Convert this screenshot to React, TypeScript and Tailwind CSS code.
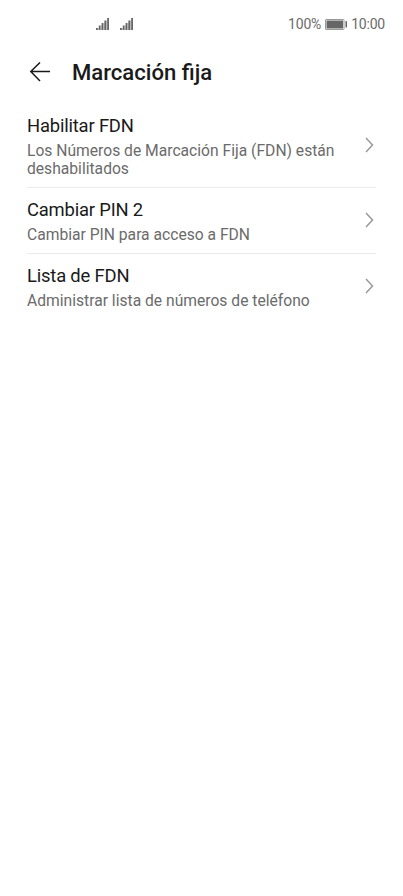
const items = [
  { title: "Habilitar FDN", text: "Los Números de Marcación Fija (FDN) están deshabilitados", height: "h-[84px]" },
  { title: "Cambiar PIN 2", text: "Cambiar PIN para acceso a FDN", height: "h-[66px]" },
  { title: "Lista de FDN", text: "Administrar lista de números de teléfono", height: "h-[66px]" },
];

const Signal = () => (
  <svg width="14" height="12" viewBox="0 0 14 12" fill="#666">
    <path d="M2 10H4V12H2zM5 7.500H6.500V12H5zM7.500 5H9.500V12H7.500zM10 2.500H11.500V12H10z" fill="#ccc" />
    <rect x="0" y="10" width="1.8" height="2" />
    <rect x="2.8" y="7.5" width="1.8" height="4.500" />
    <rect x="5.6" y="5" width="1.8" height="7" />
    <rect x="8.4" y="2.5" width="1.8" height="9.500" />
    <rect x="11.2" y="0" width="1.8" height="12" />
  </svg>
);

const App = () => {
  return (
    <main className="w-[403px] h-[896px] bg-white overflow-hidden font-['Roboto',sans-serif]">
      <div className="flex items-center h-12 pt-px pl-[96px] pr-[18px] text-[14px] tracking-[-0.2px] text-[#6b6b6b]">
        <div className="flex gap-[10px] mb-[2px]">
          <Signal />
          <Signal />
        </div>
        <div className="flex items-center ml-auto gap-1">
          <span>100%</span>
          <svg width="22" height="11" viewBox="0 0 22 11" fill="none">
            <rect x="0.5" y="0.5" width="18.5" height="10" rx="0.5" stroke="#999" />
            <rect x="1.500" y="1.5" width="16.5" height="8" fill="#666" />
            <rect x="20.500" y="2" width="1.500" height="6.500" rx="0.5" fill="#666" />
          </svg>
          <span>10:00</span>
        </div>
      </div>

      <header className="flex items-center h-12 pl-[29px]">
        <svg width="22" height="20" viewBox="0 0 22 20" fill="none" stroke="#1a1a1a" strokeWidth="1.5">
          <path d="M21 9.500H2M11 0.500L1.800 9.500L11 19" />
        </svg>
        <h1 className="ml-[21px] pt-px text-[22.1px] leading-[33px] font-medium text-[#1a1a1a]">Marcación fija</h1>
      </header>

      <ul className="pl-[27px] pr-[27px] pt-[8px]">
        {items.map((item, i) => (
          <li key={item.title} className={`${item.height} flex items-center ${i < 2 ? "border-b border-[#ebebeb]" : ""}`}>
            <div className="w-[320px]">
              <h2 className="text-[18.4px] leading-[24px] tracking-[-0.18px] text-[#1a1a1a]">{item.title}</h2>
              <p className="mt-1 text-[15.65px] leading-[18px] text-[#6b6b6b]">{item.text}</p>
            </div>
            <svg className="ml-auto mb-[2px]" width="12" height="16" viewBox="0 0 12 16" fill="none" stroke="#999" strokeWidth="1.5">
              <path d="M2 1L8.500 8L2 15" />
            </svg>
          </li>
        ))}
      </ul>
    </main>
  );
};

export default App;
